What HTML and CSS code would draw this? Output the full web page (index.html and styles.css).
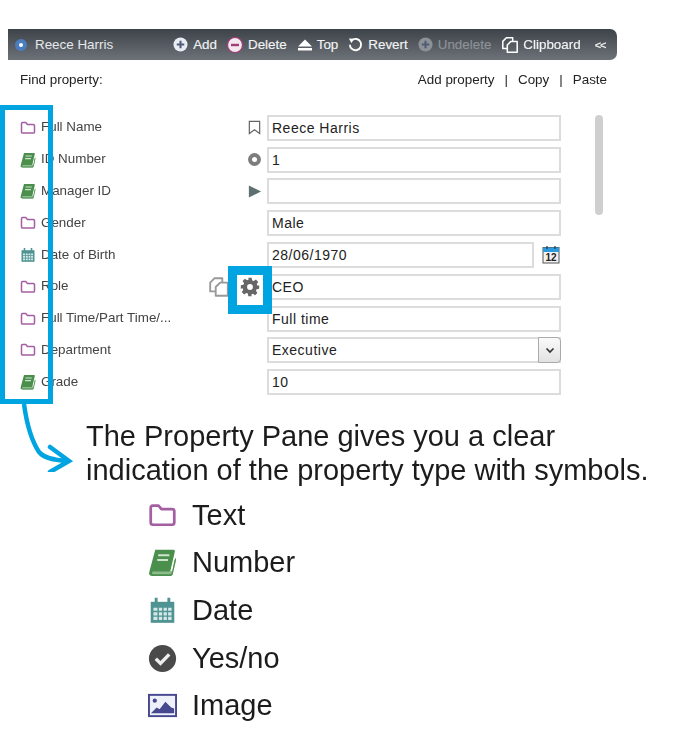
FILE: index.html
```html
<!DOCTYPE html>
<html lang="en">
<head>
<meta charset="utf-8">
<title>Property Pane</title>
<link rel="stylesheet" href="styles.css">
</head>
<body>
<svg class="defs" width="0" height="0" aria-hidden="true">
  <symbol id="i-folder" viewBox="0 0 16 16"><path d="M1.500 3.800c0-.7.500-1.200 1.200-1.200h3.100l1.600 1.900h5.900c.7 0 1.200.5 1.200 1.200v6.200c0 .7-.5 1.200-1.200 1.200H2.700c-.7 0-1.200-.5-1.200-1.200z" fill="none" stroke="#a45fa3" stroke-width="1.500" stroke-linejoin="round"/></symbol>
  <symbol id="i-book" viewBox="0 0 16 16"><path d="M2 12.500h11.500l1-6 1 .2-1.800 7.500c-.2 1-.9 1.300-1.900 1.300H2.500z" fill="#8dbb8e"/><path d="M4 1h10c.6 0 1 .5.8 1.100L12.500 12c-.2.6-.6 1-1.200 1H3c-1 0-1 1.500 0 1.500h8.800c.7 0 1.200-.4 1.400-1L15 5.500l.5.500-1.800 8c-.2 1-.9 1.500-1.900 1.500H2.500C1 15.500.3 14.500.7 13.200z" fill="#4a8f4c"/><path d="M5.600 4h6.200M5.100 6.600h5.900" stroke="#cfe3cf" stroke-width="1.100"/></symbol>
  <symbol id="i-cal" viewBox="0 0 16 16"><path d="M1.500 3.200h13v11.600h-13z" fill="#4f9493"/><path d="M4.500 1v3.500M11.500 1v3.500" stroke="#4f9493" stroke-width="1.600"/><path d="M3 6.500h2.200v1.700H3zM6 6.500h1.800v1.700H6zM8.600 6.500h1.800v1.700H8.600zM11.100 6.500h1.900v1.700h-1.900zM3 9h2.200v1.700H3zM6 9h1.800v1.700H6zM8.600 9h1.800v1.700H8.600zM11.100 9h1.900v1.700h-1.900zM3 11.500h2.200v1.700H3zM6 11.500h1.800v1.700H6zM8.600 11.500h1.800v1.700H8.600zM11.100 11.500h1.900v1.700h-1.900z" fill="#d5e8e7"/></symbol>
  <symbol id="i-clip" viewBox="0 0 20 20"><path d="M7 14H2V6l4-4h7v4" fill="none" stroke="currentColor" stroke-width="1.700" stroke-linejoin="round"/><path d="M7 10l4-4h7v12H7z" fill="none" stroke="currentColor" stroke-width="1.700" stroke-linejoin="round"/></symbol>
  <symbol id="i-plus" viewBox="0 0 16 16"><circle cx="8" cy="8" r="7.500" fill="currentColor"/><path d="M8 4v8M4 8h8" stroke="#4f5b78" stroke-width="2.200"/></symbol>
</svg>

<main class="page">
  <section class="pane">
    <header class="toolbar">
      <span class="dot"></span>
      <span class="who">Reece Harris</span>
      <nav class="tools">
        <span class="tool tool-add"><svg class="ti"><use href="#i-plus"/></svg>Add</span>
        <span class="tool tool-del"><svg class="ti" viewBox="0 0 16 16"><circle cx="8" cy="8" r="7.500" fill="#f4e9ef"/><circle cx="8" cy="8" r="7.500" fill="none" stroke="#a13d78" stroke-width="1.200"/><path d="M4 8h8" stroke="#a13d78" stroke-width="2.400"/></svg>Delete</span>
        <span class="tool tool-top"><svg class="ti" viewBox="0 0 16 16"><path d="M8 2.500l7 7H1zM1 11h14v2.500H1z" fill="#fff"/></svg>Top</span>
        <span class="tool tool-rev"><svg class="ti" viewBox="0 0 16 16"><path d="M4 3.600a6 6 0 1 1-2 4.600" fill="none" stroke="#fff" stroke-width="2"/><path d="M1 1.500l6 .3-3.500 4.700z" fill="#fff"/></svg>Revert</span>
        <span class="tool tool-und"><svg class="ti"><use href="#i-plus"/></svg>Undelete</span>
        <span class="tool tool-clip"><svg class="ti ti-clip"><use href="#i-clip"/></svg>Clipboard</span>
        <span class="chev">&lt;&lt;</span>
      </nav>
    </header>

    <div class="findbar">
      <span>Find property:</span>
      <span class="links"><span>Add property</span><i>|</i><span>Copy</span><i>|</i><span>Paste</span></span>
    </div>

    <div class="props">
      <div class="row">
        <svg class="ptype"><use href="#i-folder"/></svg><span class="plabel">Full Name</span>
        <span class="marks"><svg class="mark" viewBox="0 0 16 16"><path d="M2.500 1.500h11v13L8 10.500l-5.500 4z" fill="none" stroke="#666" stroke-width="1.300"/></svg></span>
        <div class="field">Reece Harris</div>
      </div>
      <div class="row">
        <svg class="ptype"><use href="#i-book"/></svg><span class="plabel">ID Number</span>
        <span class="marks"><svg class="mark" viewBox="0 0 16 16"><circle cx="8" cy="8" r="4.800" fill="none" stroke="#7d7d7d" stroke-width="4.200"/></svg></span>
        <div class="field">1</div>
      </div>
      <div class="row">
        <svg class="ptype"><use href="#i-book"/></svg><span class="plabel">Manager ID</span>
        <span class="marks"><svg class="mark" viewBox="0 0 16 16"><path d="M2 1.500l13 6.500-13 6.500z" fill="#5f7070"/></svg></span>
        <div class="field"></div>
      </div>
      <div class="row">
        <svg class="ptype"><use href="#i-folder"/></svg><span class="plabel">Gender</span>
        <span class="marks"></span>
        <div class="field">Male</div>
      </div>
      <div class="row">
        <svg class="ptype"><use href="#i-cal"/></svg><span class="plabel">Date of Birth</span>
        <span class="marks"></span>
        <div class="field field-date">28/06/1970</div>
        <svg class="calpick" viewBox="0 0 18 18"><rect x="1" y="1.500" width="16" height="15.500" fill="#f2f2f2" stroke="#555"/><rect x="1" y="1.500" width="16" height="4.500" fill="#2b9be0"/><path d="M5 0v3M13 0v3" stroke="#333" stroke-width="1.200"/><text x="9" y="15" class="calnum">12</text></svg>
      </div>
      <div class="row">
        <svg class="ptype"><use href="#i-folder"/></svg><span class="plabel">Role</span>
        <span class="marks marks-role"><svg class="mark-clip"><use href="#i-clip"/></svg><svg class="mark-gear" viewBox="0 0 24 24"><path fill="#666" fill-rule="evenodd" d="M10 1h4l.6 3.100 1.900.8 2.600-1.800 2.800 2.800-1.800 2.600.8 1.900L23 10v4l-3.100.6-.8 1.900 1.800 2.600-2.800 2.800-2.600-1.800-1.900.8L14 23h-4l-.6-3.100-1.900-.8-2.600 1.800-2.800-2.800 1.800-2.600-.8-1.900L1 14v-4l3.100-.6.8-1.900-1.800-2.600 2.800-2.800 2.600 1.800 1.900-.8zM12 8.500a3.500 3.500 0 1 0 0 7 3.500 3.500 0 0 0 0-7z"/></svg></span>
        <div class="field">CEO</div>
      </div>
      <div class="row">
        <svg class="ptype"><use href="#i-folder"/></svg><span class="plabel">Full Time/Part Time/...</span>
        <span class="marks"></span>
        <div class="field">Full time</div>
      </div>
      <div class="row">
        <svg class="ptype"><use href="#i-folder"/></svg><span class="plabel">Department</span>
        <span class="marks"></span>
        <div class="field field-select">Executive<span class="selbtn"><svg viewBox="0 0 10 10" width="10" height="10"><path d="M1.500 3.500L5 7l3.500-3.500" fill="none" stroke="#333" stroke-width="1.700"/></svg></span></div>
      </div>
      <div class="row">
        <svg class="ptype"><use href="#i-book"/></svg><span class="plabel">Grade</span>
        <span class="marks"></span>
        <div class="field">10</div>
      </div>
      <span class="scrollthumb"></span>
    </div>
  </section>

  <p class="callout">The Property Pane gives you a clear<br>indication of the property type with symbols.</p>

  <ul class="legend">
    <li><svg class="lg"><use href="#i-folder"/></svg>Text</li>
    <li><svg class="lg"><use href="#i-book"/></svg>Number</li>
    <li><svg class="lg"><use href="#i-cal"/></svg>Date</li>
    <li><svg class="lg" viewBox="0 0 16 16"><circle cx="8" cy="8" r="7.500" fill="#4a4a4a"/><path d="M4.300 8.200l2.600 2.500 4.800-5" fill="none" stroke="#eee" stroke-width="1.900"/></svg>Yes/no</li>
    <li><svg class="lg lg-img" viewBox="0 0 30 24"><rect x="1" y="1" width="28" height="22" fill="#eef0fa" stroke="#47478f" stroke-width="2"/><circle cx="7" cy="7" r="2.200" fill="#47478f"/><path d="M3 20l6-6 3 2 6-8 6 6 3 1v5z" fill="#47478f"/></svg>Image</li>
  </ul>

  <svg class="arrow" viewBox="0 0 80 70" width="80" height="70" aria-hidden="true"><path d="M24 2c3 22 7 36 15 48 5 6 14 8 28 9" fill="none" stroke="#00a4e0" stroke-width="4.500"/><path d="M50 45l19 14-19 11" fill="none" stroke="#00a4e0" stroke-width="4.500" stroke-linecap="round"/></svg>
  <span class="hl hl-col"></span>
  <span class="hl hl-gear"></span>
</main>
</body>
</html>
```

FILE: styles.css
```css
html, body { margin: 0; padding: 0; background: #fff; }
body { width: 692px; height: 740px; overflow: hidden; font-family: "Liberation Sans", Arial, sans-serif; color: #222; }
.defs { position: absolute; }
.page { position: relative; height: 740px; padding-top: 29px; box-sizing: border-box; }

.pane { position: relative; width: 609px; margin-left: 8px; filter: blur(0.35px); }

.toolbar { display: flex; align-items: center; height: 31px; padding-left: 7px; border-radius: 0 7px 7px 0; background: linear-gradient(#3e434a, #6d7278); color: #f2f3f4; font-size: 13.400px; }
.dot { width: 4px; height: 4px; border-radius: 50%; background: #fff; border: 4px solid #4a7cc0; margin-right: 8px; }
.who { color: #e6e8ea; }
.tools { display: flex; align-items: center; margin-left: 60px; }
.tool { display: flex; align-items: center; gap: 5px; margin-right: 10px; font-weight: 400; -webkit-text-stroke: 0.15px currentColor; }
.ti { width: 15px; height: 15px; }
.tool-top { gap: 4px; }
.tool-top .ti { width: 16px; height: 16px; }
.tool-add .ti { color: #e8ecf4; }
.tool-und { color: #8d9297; }
.tool-und .ti { color: #8d9297; }
.tool-del .ti { width: 16px; height: 16px; }
.ti-clip { width: 18px; height: 18px; color: #fff; }
.tool-clip { gap: 4px; margin-right: 14px; }
.chev { font-size: 11px; font-weight: 700; letter-spacing: -1px; color: #eee; }

.findbar { display: flex; justify-content: space-between; margin-top: 12px; height: 16px; padding: 0 10px 0 12px; font-size: 13.400px; line-height: 16px; color: #222; }
.links { display: flex; gap: 10px; }
.links i { font-style: normal; }

.props { position: relative; margin-top: 15px; display: flow-root; padding-top: 9px; }
.row { display: flex; align-items: center; height: 31.800px; padding-left: 12px; box-sizing: border-box; }
.ptype { width: 16px; height: 16px; flex: none; }
.plabel { width: 180px; margin-left: 5px; font-size: 13.400px; color: #444; flex: none; position: relative; top: -1px; white-space: nowrap; }
.marks { display: flex; align-items: center; justify-content: flex-end; width: 46px; flex: none; padding-right: 5px; box-sizing: border-box; }
.mark { width: 15px; height: 15px; flex: none; }
.marks-role { gap: 10px; padding-right: 7px; }
.mark-clip { width: 22px; height: 22px; color: #999; flex: none; }
.mark-gear { width: 20px; height: 20px; flex: none; }
.field { position: relative; width: 294px; height: 26px; box-sizing: border-box; border: 2px solid #dcdcdc; padding-left: 3px; font-size: 14px; line-height: 22px; letter-spacing: 0.5px; color: #222; background: #fff; flex: none; }
.field-date { width: 267px; }
.calpick { width: 18px; height: 18px; margin-left: 8px; flex: none; }
.calnum { font: 700 10px "Liberation Sans", Arial, sans-serif; text-anchor: middle; fill: #222; }
.selbtn { position: absolute; right: -2px; top: -2px; width: 23px; height: 26px; box-sizing: border-box; display: flex; align-items: center; justify-content: center; border: 1px solid #aaa; border-radius: 0 4px 4px 0; background: linear-gradient(#fafafa, #e2e2e2); }
.scrollthumb { position: absolute; left: 587px; top: 12px; width: 8px; height: 100px; border-radius: 4px; background: #cfcfcf; }

.callout { margin: 21px 0 0 86px; font-size: 29px; line-height: 34px; color: #1c1c1c; white-space: nowrap; filter: blur(0.25px); }

.legend { list-style: none; margin: 4px 0 0 148px; padding: 0; font-size: 29px; color: #1c1c1c; filter: blur(0.25px); }
.legend li { display: flex; align-items: center; gap: 15px; height: 47.700px; }
.lg { width: 29px; height: 29px; flex: none; }

.hl { position: absolute; box-sizing: border-box; border-style: solid; border-color: #00a4e0; }
.hl-col { left: 0; top: 105px; width: 53px; height: 299px; border-width: 5px; }
.hl-gear { left: 228px; top: 266px; width: 44px; height: 48px; border-width: 9px; }
.arrow { position: absolute; left: 0; top: 402px; }
```
